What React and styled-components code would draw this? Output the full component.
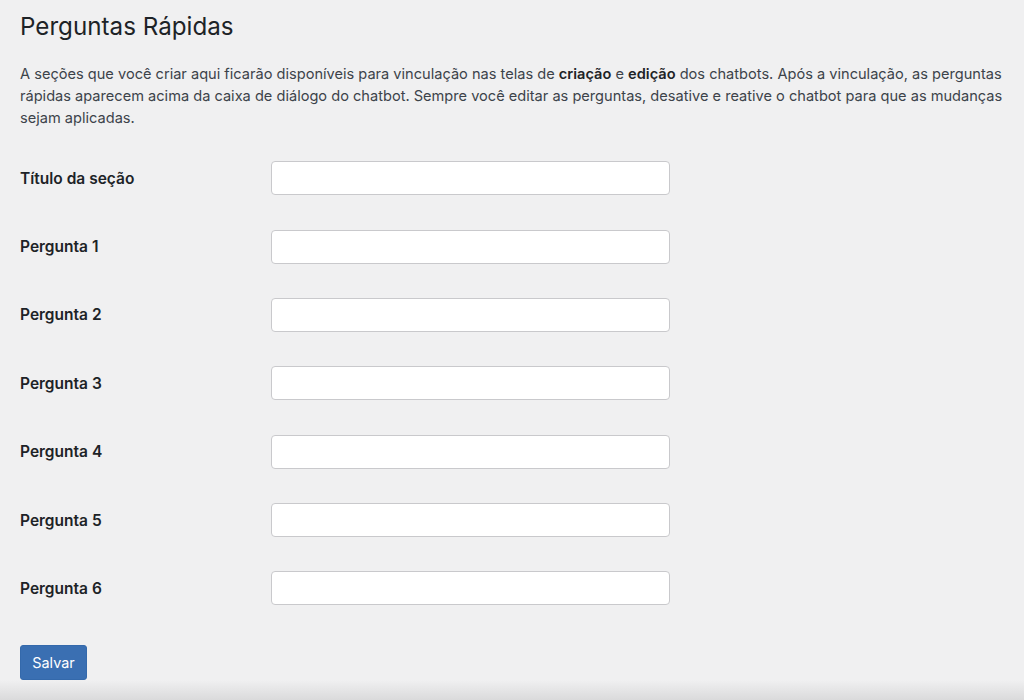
import React from 'react'
import styled, { createGlobalStyle } from 'styled-components'

const GlobalStyle = createGlobalStyle`
    html, body {
        margin: 0;
        padding: 0;
    }
    body {
        min-height: 700px;
        background: linear-gradient(to bottom, #f0f0f1 0, #f0f0f1 680px, #dadadb 700px);
        font-family: Inter, "Noto Sans", sans-serif;
        color: #3c434a;
    }
`

const Page = styled.div`
    padding: 12px 20px 0 20px;
`

const Title = styled.h1`
    margin: 0;
    font-size: 24.2px;
    font-weight: 400;
    line-height: 30px;
    color: #1d2327;
`

const Intro = styled.p`
    margin: 21px 0 0 0;
    font-size: 14.6px;
    line-height: 22px;
    color: #3c434a;

    strong {
        font-weight: 600;
        color: #1d2327;
    }
`

// Form

const Form = styled.form`
    margin-top: 15px;
`

const Row = styled.div`
    display: flex;
    align-items: center;
    padding: 17.2px 0;
`

const Label = styled.label`
    width: 251px;
    flex-shrink: 0;
    font-size: 15.5px;
    font-weight: 600;
    color: #1d2327;
`

const Input = styled.input`
    box-sizing: border-box;
    width: 399px;
    height: 34px;
    margin: 0;
    padding: 0 8px;
    background: #fff;
    border: 1px solid #c9c9cc;
    border-radius: 4px;
    font-family: inherit;
    font-size: 14px;
    outline: none;
`

const Footer = styled.div`
    padding-top: 22px;
`

const Button = styled.button`
    box-sizing: border-box;
    width: 67px;
    height: 35px;
    padding: 0;
    background: #3a6fb2;
    border: 1px solid #3469ab;
    border-radius: 3px;
    color: #fff;
    font-family: inherit;
    font-size: 14.4px;
    cursor: pointer;
`

const fields = [
    'Título da seção',
    'Pergunta 1',
    'Pergunta 2',
    'Pergunta 3',
    'Pergunta 4',
    'Pergunta 5',
    'Pergunta 6',
]

const App = () => {
    return (
        <>
            <GlobalStyle />
            <Page>
                <Title>Perguntas Rápidas</Title>
                <Intro>
                    A seções que você criar aqui ficarão disponíveis para vinculação nas telas de <strong>criação</strong> e <strong>edição</strong> dos chatbots. Após a vinculação, as perguntas rápidas aparecem acima da caixa de diálogo do chatbot. Sempre você editar as perguntas, desative e reative o chatbot para que as mudanças sejam aplicadas.
                </Intro>
                <Form onSubmit={e => e.preventDefault()}>
                    {fields.map(f => (
                        <Row key={f}>
                            <Label>{f}</Label>
                            <Input type="text" />
                        </Row>
                    ))}
                    <Footer>
                        <Button type="submit">Salvar</Button>
                    </Footer>
                </Form>
            </Page>
        </>
    )
}

export default App
